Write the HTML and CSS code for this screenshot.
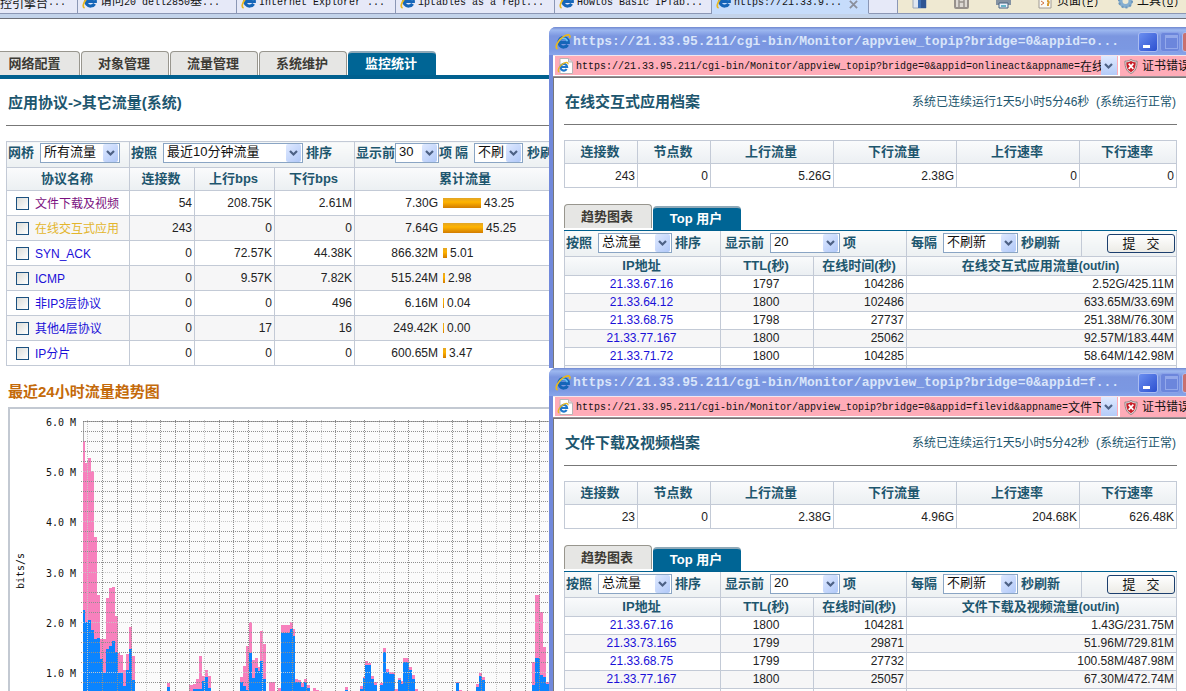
FILE: index.html
```
<!DOCTYPE html>
<html lang="zh-CN">
<head>
<meta charset="utf-8">
<title>监控统计</title>
<link rel="stylesheet" href="styles.css">
</head>
<body>
<svg class="defs" aria-hidden="true">
  <symbol id="ie" viewBox="0 0 16 16">
    <path d="M12.6 10.8A4.7 4.7 0 1 1 13.3 8.4H5" fill="none" stroke="#1565b8" stroke-width="3.2"/>
    <path d="M12.4 7.2A4.2 4.2 0 0 0 4.6 6.6" fill="none" stroke="#6cc4f5" stroke-width="1.4"/>
    <path d="M2.6 15C-1 13.6 3 6 8.4 2.6 12.4 0 16 .2 14.6 4" fill="none" stroke="#e9b820" stroke-width="1.7"/>
  </symbol>
  <symbol id="iepage" viewBox="0 0 16 16">
    <path d="M3 .5h8.500L15.500 4v11.500H3z" fill="#fff" stroke="#b9b4b4"/>
    <path d="M11.500.5V4h4" fill="#ddd" stroke="#b9b4b4"/>
    <path d="M9.600 11A3.300 3.300 0 1 1 10.100 9H4" fill="none" stroke="#1f78cc" stroke-width="2.200"/>
    <path d="M2 14C-.2 12 3 7 7 5.200c3-1.400 4.500-.6 3.800 1" fill="none" stroke="#e9b820" stroke-width="1.300"/>
  </symbol>
  <symbol id="chev" viewBox="0 0 15 18">
    <path d="M4 7l3.500 3.500L11 7" fill="none" stroke="#4d6185" stroke-width="2.200"/>
  </symbol>
  <symbol id="shield" viewBox="0 0 14 16">
    <path d="M7 .5c2 1.500 4 1.800 6.500 1.800C13.500 9 12 13 7 15.500 2 13 .5 9 .5 2.300 3 2.300 5 2 7 .5z" fill="#e4e0e0" stroke="#8c8080"/>
    <path d="M7 2c1.500 1 3 1.500 5 1.500C12 8.500 10.800 12 7 14 3.200 12 2 8.500 2 3.500 4 3.500 5.500 3 7 2z" fill="#c81e28"/>
    <path d="M4.500 5l5 5.500M9.500 5l-5 5.500" stroke="#fff" stroke-width="1.800"/>
  </symbol>
</svg>

<header class="browser">
  <nav class="browser-tabs">
    <span class="btab btab-first"><b class="cn">控引擎台</b>...</span>
    <span class="btab"><svg class="ico"><use href="#ie"/></svg><span><b class="cn">请问</b>20 dell2850<b class="cn">基</b>...</span></span>
    <span class="btab"><svg class="ico"><use href="#ie"/></svg><span>Internet Explorer ...</span></span>
    <span class="btab"><svg class="ico"><use href="#ie"/></svg><span>iptables as a repl...</span></span>
    <span class="btab btab-short"><svg class="ico"><use href="#ie"/></svg><span>Howtos Basic IPTab...</span></span>
    <span class="btab btab-on"><svg class="ico"><use href="#ie"/></svg><span class="grow">https://21.33.9...</span><svg class="x" viewBox="0 0 10 10"><path d="M1 1l8 8M9 1l-8 8" stroke="#8a8f9c" stroke-width="2"/></svg></span>
    <span class="btab btab-new"></span>
  </nav>
  <div class="toolbar">
    <svg class="tool" viewBox="0 0 15 15"><path d="M1 1h13v13H1z" fill="#dfe6f0" stroke="#9aa6b8"/><path d="M6 6h3v8H6z" fill="#3f6fb4"/><path d="M9 1h5v13H9z" fill="#2f5593"/></svg>
    <svg class="tool" viewBox="0 0 15 15"><path d="M1 3h13v10q0 1-1 1H2q-1 0-1-1z" fill="#ddd9d4" stroke="#97918c" stroke-width="2"/><path d="M5 6v7M10 4v9M5 8h5" stroke="#97918c" stroke-width="1.500"/></svg>
    <svg class="tool" viewBox="0 0 15 15"><path d="M0 6h15v5H0z" fill="#8492a2"/><path d="M3 9h9v5H3z" fill="#e8f0fa" stroke="#46617f"/><path d="M5 12h5" stroke="#3aa0b8" stroke-width="1.500"/></svg>
    <svg class="tool" viewBox="0 0 15 15"><path d="M1 1h12v13H1z" fill="#fbfbf6" stroke="#a09a94"/><path d="M3 7l3 2-3 2" fill="none" stroke="#d07040"/><path d="M9 7q3 0 1 3v2" fill="none" stroke="#d89a30" stroke-width="2"/></svg>
    <span class="toolname"><b class="cn">页面</b>(<u>P</u>)</span>
    <svg class="tool" viewBox="0 0 15 15"><circle cx="7.500" cy="7" r="5" fill="none" stroke="#85aed0" stroke-width="4"/><circle cx="7.500" cy="7" r="6.500" fill="none" stroke="#6f98bb" stroke-width="2" stroke-dasharray="2 2"/></svg>
    <span class="toolname"><b class="cn">工具</b>(<u>O</u>)</span>
  </div>
</header>

<main class="page">
  <nav class="tabs">
    <a class="tab tab-cut" href="#">网络配置</a>
    <a class="tab" href="#">对象管理</a>
    <a class="tab" href="#">流量管理</a>
    <a class="tab" href="#">系统维护</a>
    <a class="tab tab-on" href="#">监控统计</a>
  </nav>
  <div class="body">
    <h1 class="heading">应用协议-&gt;其它流量(系统)</h1>
    <table class="grid main-grid">
      <colgroup><col class="c-name"><col class="c-conn"><col class="c-bps"><col class="c-bps"><col></colgroup>
      <tr class="filter">
        <td><label class="f">网桥<span class="sel w80"><select><option>所有流量</option></select><svg><use href="#chev"/></svg></span></label></td>
        <td colspan="3"><label class="f">按照<span class="sel w140"><select><option>最近10分钟流量</option></select><svg><use href="#chev"/></svg></span><span class="after">排序</span></label></td>
        <td><div class="f tight"><label class="f tight">显示前<span class="sel w44"><select><option>30</option></select><svg><use href="#chev"/></svg></span>项</label><label class="f second">隔<span class="sel w49"><select><option>不刷</option></select><svg><use href="#chev"/></svg></span><span class="after">秒刷</span></label></div></td>
      </tr>
      <tr class="head"><th>协议名称</th><th>连接数</th><th>上行bps</th><th>下行bps</th><th>累计流量</th></tr>
      <tr><td><span class="proto"><input type="checkbox" aria-label="文件下载及视频"><a class="seen" href="#">文件下载及视频</a></span></td><td>54</td><td>208.75K</td><td>2.61M</td><td><span class="total"><span class="amount">7.30G</span><i class="bar" style="width:38px"></i>43.25</span></td></tr>
      <tr><td><span class="proto"><input type="checkbox" aria-label="在线交互式应用"><a class="hot" href="#">在线交互式应用</a></span></td><td>243</td><td>0</td><td>0</td><td><span class="total"><span class="amount">7.64G</span><i class="bar" style="width:40px"></i>45.25</span></td></tr>
      <tr><td><span class="proto"><input type="checkbox" aria-label="SYN_ACK"><a href="#">SYN_ACK</a></span></td><td>0</td><td>72.57K</td><td>44.38K</td><td><span class="total"><span class="amount">866.32M</span><i class="bar" style="width:4px"></i>5.01</span></td></tr>
      <tr><td><span class="proto"><input type="checkbox" aria-label="ICMP"><a href="#">ICMP</a></span></td><td>0</td><td>9.57K</td><td>7.82K</td><td><span class="total"><span class="amount">515.24M</span><i class="bar" style="width:2px"></i>2.98</span></td></tr>
      <tr><td><span class="proto"><input type="checkbox" aria-label="非IP3层协议"><a href="#">非IP3层协议</a></span></td><td>0</td><td>0</td><td>496</td><td><span class="total"><span class="amount">6.16M</span><i class="bar" style="width:1px"></i>0.04</span></td></tr>
      <tr><td><span class="proto"><input type="checkbox" aria-label="其他4层协议"><a href="#">其他4层协议</a></span></td><td>0</td><td>17</td><td>16</td><td><span class="total"><span class="amount">249.42K</span><i class="bar" style="width:1px"></i>0.00</span></td></tr>
      <tr><td><span class="proto"><input type="checkbox" aria-label="IP分片"><a href="#">IP分片</a></span></td><td>0</td><td>0</td><td>0</td><td><span class="total"><span class="amount">600.65M</span><i class="bar" style="width:3px"></i>3.47</span></td></tr>
    </table>
    <h2 class="chart-title">最近24小时流量趋势图</h2>
    <div class="chart">
      <svg viewBox="10 28 540 283" role="img" aria-label="流量趋势">
        <g transform="scale(0.333333)" shape-rendering="crispEdges">
          <path d="M249 120H1650V940H249z" fill="#fbfbfb"/>
          <path fill="#f781bd" d="M249 940V180H255V246H264V231H273V270H282V468H291V642H300V774H318V651H327V621H336V618H345V705H354V816H360V822H369V867H378V819H387V738H396V825H405V940zM501 940V906H510V940zM567 940V912H579V909H588V894H597V825H606V885H615V867H624V885H633V940zM720 940V888H729V855H738V795H747V724H756V837H765V831H774V858H780V750H789V789H798V930H807V903H825V930H834V922H843V732H870V724H879V744H885V894H894V898H903V906H912V894H921V912H930V930H939V922H948V928H957V940zM1035 940V918H1044V940zM1080 940V915H1089V888H1095V840H1104V846H1113V885H1122V903H1131V940zM1140 940V906H1149V801H1158V864H1167V873H1185V924H1194V891H1203V900H1209V831H1227V858H1236V882H1245V924H1254V940zM1368 940V902H1377V927H1386V940zM1428 940V909H1437V876H1446V888H1455V940zM1596 940V843H1605V642H1620V693H1629V798H1638V904H1650V940z"/>
          <path fill="#0a84ff" d="M249 940V687H255V724H264V717H273V747H282V774H291V771H300V834H309V876H318V804H327V795H336V780H345V813H354V876H369V915H378V867H387V804H396V897H405V940zM501 940V918H510V940zM579 940V924H606V900H615V888H624V921H633V940zM720 940V903H729V915H738V926H747V816H756V890H765V861H774V869H780V840H789V894H798V940zM843 940V755H870V743H879V765H885V904H903V917H912V902H921V920H930V940zM1035 940V926H1044V940zM1080 940V924H1089V890H1095V851H1113V893H1122V911H1131V940zM1140 940V912H1149V813H1158V873H1167V880H1185V930H1194V897H1203V909H1209V843H1227V867H1236V895H1245V940zM1368 940V906H1377V940zM1428 940V918H1437V884H1446V897H1455V940zM1596 940V911H1605V831H1620V882H1629V887H1638V910H1650V940z"/>
          <path fill="none" stroke="#8f8f8f" stroke-width="3" stroke-dasharray="3 3" d="M249 121.500H1650M243 151.500H1650M243 181.500H1650M243 211.500H1650M243 241.500H1650M243 301.500H1650M243 331.500H1650M243 361.500H1650M243 391.500H1650M243 451.500H1650M243 481.500H1650M243 511.500H1650M243 544.500H1650M243 604.500H1650M243 634.500H1650M243 664.500H1650M243 694.500H1650M243 754.500H1650M243 784.500H1650M243 814.500H1650M243 844.500H1650M243 904.500H1650M307.500 117V940M352.500 117V940M394.500 117V940M481.500 117V940M526.500 117V940M568.500 117V940M658.500 117V940M700.500 117V940M745.500 117V940M832.500 117V940M877.500 117V940M919.500 117V940M1006.500 117V940M1051.500 117V940M1093.500 117V940M1183.500 117V940M1225.500 117V940M1270.500 117V940M1357.500 117V940M1402.500 117V940M1444.500 117V940M1531.500 117V940M1576.500 117V940M1618.500 117V940"/>
          <path fill="none" stroke="#c6c6c6" stroke-width="3" stroke-dasharray="3 3" d="M243 271.500H1650M243 421.500H1650M243 574.500H1650M243 724.500H1650M243 874.500H1650M262.500 117V940M439.500 117V940M613.500 117V940M787.500 117V940M964.500 117V940M1138.500 117V940M1312.500 117V940M1489.500 117V940"/>
          <path d="M250.500 121V180M249 121.500H1650" fill="none" stroke="#777" stroke-opacity=".6" stroke-width="3"/>
        </g>
        <g class="axis">
          <text x="46" y="45">6.0 M</text><text x="46" y="95">5.0 M</text><text x="46" y="145">4.0 M</text><text x="46" y="196">3.0 M</text><text x="46" y="246">2.0 M</text><text x="46" y="296">1.0 M</text>
          <text transform="translate(24 208) rotate(-90)">bits/s</text>
        </g>
      </svg>
    </div>
  </div>
</main>

<section class="window win-a">
  <div class="titlebar"><svg class="ico"><use href="#ie"/></svg><span class="title">https://21.33.95.211/cgi-bin/Monitor/appview_topip?bridge=0&amp;appid=o...</span><button class="cap min" aria-label="最小化"></button><button class="cap max" aria-label="最大化"></button><button class="cap close" aria-label="关闭"></button></div>
  <div class="address"><div class="url"><svg class="ico"><use href="#iepage"/></svg><span class="url-text">https://21.33.95.211/cgi-bin/Monitor/appview_topip?bridge=0&amp;appid=onlineact&amp;appname=<b class="cn">在线</b></span><button class="drop" aria-label="地址列表"><svg><use href="#chev"/></svg></button></div><div class="cert"><svg><use href="#shield"/></svg>证书错误</div></div>
  <div class="content">
    <div class="top"><h2 class="heading">在线交互式应用档案</h2><span>系统已连续运行1天5小时5分46秒&nbsp; (系统运行正常)</span></div>
    <table class="grid stats">
      <colgroup><col class="s1"><col class="s1"><col class="s2"><col class="s2"><col class="s2"><col></colgroup>
      <tr class="head"><th>连接数</th><th>节点数</th><th>上行流量</th><th>下行流量</th><th>上行速率</th><th>下行速率</th></tr>
      <tr><td>243</td><td>0</td><td>5.26G</td><td>2.38G</td><td>0</td><td>0</td></tr>
    </table>
    <nav class="subtabs"><a class="tab" href="#">趋势图表</a><a class="tab tab-on" href="#">Top 用户</a></nav>
    <table class="grid users">
      <colgroup><col class="u1"><col class="u2"><col class="u2"><col><col class="u3"></colgroup>
      <tr class="filter">
        <td><label class="f">按照<span class="sel w74"><select><option>总流量</option></select><svg><use href="#chev"/></svg></span><span class="after">排序</span></label></td>
        <td colspan="2"><label class="f inset">显示前<span class="sel w70"><select><option>20</option></select><svg><use href="#chev"/></svg></span><span class="after">项</span></label></td>
        <td><label class="f inset">每隔<span class="sel w75"><select><option>不刷新</option></select><svg><use href="#chev"/></svg></span><span class="after">秒刷新</span></label></td>
        <td class="act"><button class="submit">提&nbsp;&nbsp; 交</button></td>
      </tr>
      <tr class="head"><th>IP地址</th><th>TTL(秒)</th><th>在线时间(秒)</th><th colspan="2">在线交互式应用流量<span class="reg">(out/in)</span></th></tr>
      <tr><td><a href="#">21.33.67.16</a></td><td>1797</td><td>104286</td><td colspan="2">2.52G/425.11M</td></tr>
      <tr><td><a href="#">21.33.64.12</a></td><td>1800</td><td>102486</td><td colspan="2">633.65M/33.69M</td></tr>
      <tr><td><a href="#">21.33.68.75</a></td><td>1798</td><td>27737</td><td colspan="2">251.38M/76.30M</td></tr>
      <tr><td><a href="#">21.33.77.167</a></td><td>1800</td><td>25062</td><td colspan="2">92.57M/183.44M</td></tr>
      <tr><td><a href="#">21.33.71.72</a></td><td>1800</td><td>104285</td><td colspan="2">58.64M/142.98M</td></tr>
      <tr><td></td><td></td><td></td><td colspan="2"></td></tr>
    </table>
  </div>
</section>

<section class="window win-b">
  <div class="titlebar"><svg class="ico"><use href="#ie"/></svg><span class="title">https://21.33.95.211/cgi-bin/Monitor/appview_topip?bridge=0&amp;appid=f...</span><button class="cap min" aria-label="最小化"></button><button class="cap max" aria-label="最大化"></button><button class="cap close" aria-label="关闭"></button></div>
  <div class="address"><div class="url"><svg class="ico"><use href="#iepage"/></svg><span class="url-text">https://21.33.95.211/cgi-bin/Monitor/appview_topip?bridge=0&amp;appid=filevid&amp;appname=<b class="cn">文件下</b></span><button class="drop" aria-label="地址列表"><svg><use href="#chev"/></svg></button></div><div class="cert"><svg><use href="#shield"/></svg>证书错误</div></div>
  <div class="content">
    <div class="top"><h2 class="heading">文件下载及视频档案</h2><span>系统已连续运行1天5小时5分42秒&nbsp; (系统运行正常)</span></div>
    <table class="grid stats">
      <colgroup><col class="s1"><col class="s1"><col class="s2"><col class="s2"><col class="s2"><col></colgroup>
      <tr class="head"><th>连接数</th><th>节点数</th><th>上行流量</th><th>下行流量</th><th>上行速率</th><th>下行速率</th></tr>
      <tr><td>23</td><td>0</td><td>2.38G</td><td>4.96G</td><td>204.68K</td><td>626.48K</td></tr>
    </table>
    <nav class="subtabs"><a class="tab" href="#">趋势图表</a><a class="tab tab-on" href="#">Top 用户</a></nav>
    <table class="grid users">
      <colgroup><col class="u1"><col class="u2"><col class="u2"><col><col class="u3"></colgroup>
      <tr class="filter">
        <td><label class="f">按照<span class="sel w74"><select><option>总流量</option></select><svg><use href="#chev"/></svg></span><span class="after">排序</span></label></td>
        <td colspan="2"><label class="f inset">显示前<span class="sel w70"><select><option>20</option></select><svg><use href="#chev"/></svg></span><span class="after">项</span></label></td>
        <td><label class="f inset">每隔<span class="sel w75"><select><option>不刷新</option></select><svg><use href="#chev"/></svg></span><span class="after">秒刷新</span></label></td>
        <td class="act"><button class="submit">提&nbsp;&nbsp; 交</button></td>
      </tr>
      <tr class="head"><th>IP地址</th><th>TTL(秒)</th><th>在线时间(秒)</th><th colspan="2">文件下载及视频流量<span class="reg">(out/in)</span></th></tr>
      <tr><td><a href="#">21.33.67.16</a></td><td>1800</td><td>104281</td><td colspan="2">1.43G/231.75M</td></tr>
      <tr><td><a href="#">21.33.73.165</a></td><td>1799</td><td>29871</td><td colspan="2">51.96M/729.81M</td></tr>
      <tr><td><a href="#">21.33.68.75</a></td><td>1799</td><td>27732</td><td colspan="2">100.58M/487.98M</td></tr>
      <tr><td><a href="#">21.33.77.167</a></td><td>1800</td><td>25057</td><td colspan="2">67.30M/472.74M</td></tr>
      <tr><td></td><td></td><td></td><td colspan="2"></td></tr>
    </table>
  </div>
</section>
</body>
</html>
```

FILE: styles.css
```
* { box-sizing: border-box; }

html { height: 100%; overflow: hidden; }

body {
  margin: 0;
  height: 100%;
  overflow: hidden;
  position: relative;
  background: #fff;
  color: #222;
  font: 12px/16px "Liberation Sans", "Noto Sans CJK SC", sans-serif;
}

a { color: #1a10d8; text-decoration: none; }
h1, h2 { margin: 0; }
.defs { position: absolute; width: 0; height: 0; }
.ico { width: 16px; height: 16px; flex: none; }
.cn { font: 12px/12px "Noto Sans CJK SC", sans-serif; }

/* Browser strip */
.browser {
  display: flex;
  height: 19px;
  overflow: hidden;
  background: #c3d3ea;
  border-bottom: 1px solid #6d7078;
  font: 10px/12px "Liberation Mono", "Noto Sans CJK SC", monospace;
  color: #111;
}
.browser-tabs { display: flex; flex: none; height: 14px; }
.btab {
  display: flex;
  align-items: flex-end;
  gap: 2px;
  width: 159px;
  height: 14px;
  padding: 0 4px 4px;
  white-space: nowrap;
  background: #e6e9f8;
  border-right: 1px solid #8b97b5;
  border-bottom: 1px solid #8b97b5;
}
.btab-first { width: 78px; padding-left: 0; gap: 0; }
.btab-short { width: 157px; }
.btab-on { background: #c6dcfb; border-bottom-color: #c6dcfb; width: 157px; }
.btab-new { width: 29px; }
.btab .x { width: 9px; height: 9px; margin: 0 6px 0 0; }
.grow { flex: 1; }
.toolbar {
  display: flex;
  flex: 1;
  height: 14px;
  align-items: flex-end;
  padding: 0 0 4px 14px;
  background: #efe9d2;
  border-bottom: 1px solid #8b97b5;
  white-space: nowrap;
}
.tool { width: 15px; height: 15px; flex: none; margin-right: 27px; }
.tool:nth-of-type(n+4) { margin-right: 4px; }
.toolname { margin-right: 19px; }

/* Page tabs */
.page { padding-top: 32px; }
.tabs {
  display: flex;
  gap: 1px;
  height: 28px;
  border-bottom: 4px solid #00608f;
}
.tab {
  display: block;
  flex: none;
  width: 88px;
  height: 24px;
  line-height: 24px;
  padding-right: 2px;
  text-align: center;
  font-size: 13px;
  font-weight: bold;
  color: #3d3b35;
  background: #e6e6e4;
  border: 1px solid #98968e;
  border-bottom: 0;
  border-radius: 4px 4px 0 0;
}
.tab-cut { width: 80px; border-left: 0; border-top-left-radius: 0; padding-right: 10px; }
.tab-on {
  color: #fff;
  background: #006595;
  border: 0;
  border-top: 2px solid #8fa9b8;
  line-height: 22px;
}

.body { width: 572px; margin-left: 6px; }
.heading { font-size: 15px; line-height: 20px; font-weight: bold; color: #1d566e; }
.body .heading {
  padding: 14px 2px 12px;
  border-bottom: 1px solid #777;
}

/* Data grids */
.grid {
  width: 100%;
  table-layout: fixed;
  border-collapse: collapse;
}
.grid th, .grid td { padding: 0 2px 0 0; border: 1px solid #c3cad6; text-align: right; }
.grid th { text-align: center; color: #1d566e; font-size: 13px; }
.grid .filter td { padding: 0 1px; background: linear-gradient(#fafbfb, #ecf0f2); text-align: left; }
.grid.main-grid .filter td { padding-bottom: 3px; }
.head { background: linear-gradient(#fafbfc, #ebeff2); }
.main-grid tr { height: 25px; }
.main-grid tr:nth-child(even):not(.head), .users tr:nth-child(even):not(.head) { background: #f6f6f7; }
.main-grid { margin-top: 15px; }
.main-grid .filter { height: 26px; }
.main-grid .head { height: 23px; }
.c-name { width: 123px; }
.c-conn { width: 65px; }
.c-bps { width: 80px; }

.proto { display: flex; align-items: center; gap: 6px; padding-left: 9px; }
.proto a { padding-top: 2px; }
.proto input {
  appearance: none;
  width: 13px;
  height: 13px;
  margin: 0;
  border: 1px solid #1c5180;
  background: linear-gradient(135deg, #dcdcd7, #fff);
}
.seen { color: #7a1080; }
.hot { color: #e3b52c; }
.total { display: flex; align-items: center; gap: 3px; }
.amount { width: 85px; padding-right: 2px; text-align: right; }
.bar { height: 10px; background: linear-gradient(#e2a526, #ffb400 40%, #d27c00); }

/* Filter controls */
.f {
  display: flex;
  align-items: center;
  gap: 6px;
  color: #1d566e;
  font-size: 13px;
  font-weight: bold;
  line-height: 16px;
  white-space: nowrap;
}
.tight { gap: 0; }
.second { margin-left: 3px; }
.inset { padding-left: 3px; }
.after { margin-left: -3px; }
.second .after { margin-left: -2px; }
.sel {
  display: grid;
  grid-template-columns: 1fr 16px;
  flex: none;
  height: 20px;
  background: #fff;
  border: 1px solid #8aa5c4;
}
.sel select {
  grid-area: 1 / 1 / 2 / 3;
  appearance: none;
  width: 100%;
  height: 18px;
  margin: 0;
  padding: 0 0 2px 3px;
  border: 0;
  background: none;
  color: #111;
  font: 13px/16px "Liberation Sans", "Noto Sans CJK SC", sans-serif;
}
.sel svg {
  grid-area: 1 / 2;
  width: 15px;
  height: 18px;
  align-self: center;
  pointer-events: none;
  background: linear-gradient(135deg, #dfe9ff, #b0c8f8);
  border-radius: 2px;
}
.w44 { width: 44px; }
.w49 { width: 49px; }
.w70 { width: 70px; }
.w74 { width: 74px; }
.w75 { width: 75px; }
.w80 { width: 80px; }
.w140 { width: 140px; }

/* Chart */
.chart-title { margin: 16px 0 5px 2px; font-size: 15px; line-height: 20px; color: #c46a0a; }
.chart { margin-left: 2px; border: 2px solid #c3c9d2; }
.chart svg { display: block; width: 540px; height: 283px; }
.axis { font: 10px "DejaVu Sans Mono", monospace; fill: #111; }

/* Popup windows */
.window {
  position: absolute;
  left: 549px;
  right: -19px;
  height: 341px;
  overflow: hidden;
  padding: 0 4px;
  background: #7189db;
  border-radius: 7px 7px 0 0;
}
.win-a { top: 27px; }
.win-b { top: 368px; }
.titlebar {
  display: flex;
  align-items: center;
  gap: 2px;
  height: 28px;
  margin: 0 -4px;
  padding: 2px 0 0 6px;
  background: linear-gradient(#7088d0, #9db8f0 3px, #7b96e0 9px, #7b98e2 22px, #88a5ea);
}
.title {
  flex: 1;
  min-width: 0;
  overflow: hidden;
  white-space: nowrap;
  font: bold 13px/20px "Liberation Mono", monospace;
  color: #d9e5fa;
}
.cap {
  flex: none;
  width: 20px;
  height: 20px;
  padding: 0;
  border: 1px solid #a9bcf2;
  border-radius: 3px;
  background: #6c86dc;
}
.min { background: linear-gradient(135deg, #6b8ff0, #2c50d0); }
.min::before { content: ""; display: block; width: 7px; height: 3px; margin: 8px 0 0 4px; background: #fff; }
.max { border-color: #8ba2e8; }
.max::before { content: ""; display: block; width: 11px; height: 10px; margin-left: 4px; border: 1px solid #93a8ea; border-top-width: 3px; }
.close { background: #c9706e; margin-right: 3px; }

.address {
  display: flex;
  height: 22px;
  background: #ffacb8;
  border-bottom: 1px solid #9a8f94;
  border-top: 1px solid #f3e6ee;
}
.url {
  display: flex;
  flex: 1;
  min-width: 0;
  align-items: center;
  padding: 0 1px 0 2px;
  border: 1px solid #fff;
  border-width: 0 2px 1px;
}
.url-text {
  flex: 1;
  min-width: 0;
  margin-left: 3px;
  padding-top: 2px;
  overflow: hidden;
  white-space: nowrap;
  font: 10px/16px "Liberation Mono", monospace;
  color: #111;
}
.url-text .cn { vertical-align: middle; }
.drop {
  width: 16px;
  height: 19px;
  padding: 0;
  border: 0;
  background: linear-gradient(#dfe9ff, #b4cbf8);
}
.drop svg { display: block; width: 15px; height: 18px; }
.cert { display: flex; flex: none; align-items: center; gap: 4px; width: 81px; padding-left: 4px; color: #111; white-space: nowrap; }
.cert svg { width: 14px; height: 15px; }

.content {
  min-height: 291px;
  padding: 14px 24px 0 10px;
  background: #fff;
  border-left: 1px solid #777;
  border-top: 1px solid #777;
}
.top {
  display: flex;
  align-items: center;
  justify-content: space-between;
  height: 33px;
  padding: 0 1px 13px;
  border-bottom: 1px solid #777;
  color: #1d566e;
}
.stats { margin-top: 15px; }
.stats tr { height: 24px; }
.stats .head { height: 23px; }
.s1 { width: 73px; }
.s2 { width: 123px; }

.subtabs {
  display: flex;
  gap: 1px;
  align-items: flex-end;
  margin-top: 16px;
  height: 27px;
  border-bottom: 1px solid #00608f;
}
.subtabs .tab { margin-bottom: 2px; }
.subtabs .tab-on { margin-bottom: 0; }
.users tr { height: 18px; }
.users .filter { height: 25px; }
.users .head { height: 19px; }
.users th { line-height: 14px; }
.users tr td:nth-child(-n+2) { text-align: center; }
.users td { line-height: 14px; }
.users .filter td { border-top: 0; }
.users .act { border-left-color: #d5dae2; }
.reg { font-size: 12px; }
.u1 { width: 156px; }
.u2 { width: 93px; }
.u3 { width: 95px; }
.submit {
  display: block;
  width: 68px;
  height: 19px;
  margin-left: auto;
  padding: 0;
  border: 1px solid #1c3f6e;
  border-radius: 3px;
  background: linear-gradient(#fff, #ecebe6);
  color: #111;
  font: 13px/15px "Liberation Sans", "Noto Sans CJK SC", sans-serif;
}
```
